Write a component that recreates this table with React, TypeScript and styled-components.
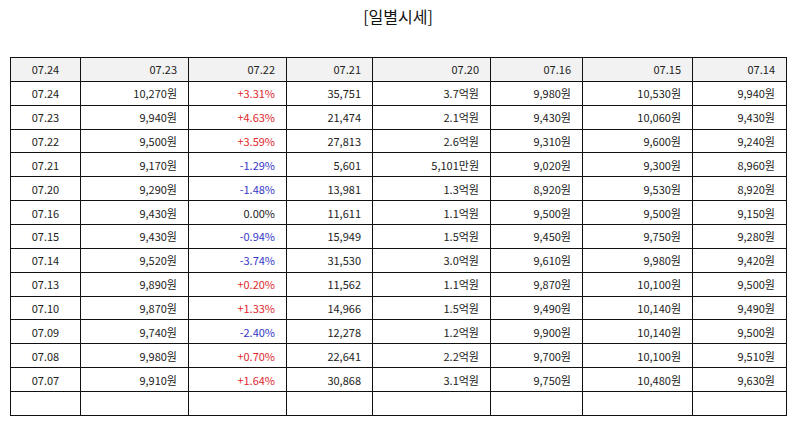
import styled, { createGlobalStyle } from "styled-components";

const GlobalStyle = createGlobalStyle`
    html, body {
        margin: 0;
        padding: 0;
        background: #ffffff;
    }
    body {
        font-family: "Noto Sans CJK KR", "Noto Sans", sans-serif;
        color: #222222;
    }
`;

const Page = styled.div`
    width: 794px;
    padding: 0 8px 0 10px;
    box-sizing: border-box;
`;

const Title = styled.h3`
    margin: 0;
    height: 57px;
    padding-top: 5px;
    box-sizing: border-box;
    text-align: center;
    font-size: 16px;
    font-weight: 400;
    line-height: 22px;
    color: #111111;
`;

const Table = styled.table`
    width: 776px;
    border-collapse: collapse;
    table-layout: fixed;
    font-size: 11px;
`;

const Cell = styled.td<{ $center?: boolean; $tone?: "up" | "down" }>`
    height: 22.87px;
    padding: ${(p) => (p.$center ? "0 2px" : "0 11px 0 4px")};
    border: 1px solid #111111;
    text-align: ${(p) => (p.$center ? "center" : "right")};
    color: ${(p) => (p.$tone === "up" ? "#e0282e" : p.$tone === "down" ? "#3636c8" : "#222222")};
    white-space: nowrap;
`;

const HeadCell = styled(Cell).attrs({ as: "th" })`
    font-weight: 400;
    background: #f2f2f2;
`;

const widths = [70, 108, 98, 86, 118, 92, 110, 94];
const header = ["07.24", "07.23", "07.22", "07.21", "07.20", "07.16", "07.15", "07.14"];

const rows: string[][] = [
    ["07.24", "10,270원", "+3.31%", "35,751", "3.7억원", "9,980원", "10,530원", "9,940원"],
    ["07.23", "9,940원", "+4.63%", "21,474", "2.1억원", "9,430원", "10,060원", "9,430원"],
    ["07.22", "9,500원", "+3.59%", "27,813", "2.6억원", "9,310원", "9,600원", "9,240원"],
    ["07.21", "9,170원", "-1.29%", "5,601", "5,101만원", "9,020원", "9,300원", "8,960원"],
    ["07.20", "9,290원", "-1.48%", "13,981", "1.3억원", "8,920원", "9,530원", "8,920원"],
    ["07.16", "9,430원", "0.00%", "11,611", "1.1억원", "9,500원", "9,500원", "9,150원"],
    ["07.15", "9,430원", "-0.94%", "15,949", "1.5억원", "9,450원", "9,750원", "9,280원"],
    ["07.14", "9,520원", "-3.74%", "31,530", "3.0억원", "9,610원", "9,980원", "9,420원"],
    ["07.13", "9,890원", "+0.20%", "11,562", "1.1억원", "9,870원", "10,100원", "9,500원"],
    ["07.10", "9,870원", "+1.33%", "14,966", "1.5억원", "9,490원", "10,140원", "9,490원"],
    ["07.09", "9,740원", "-2.40%", "12,278", "1.2억원", "9,900원", "10,140원", "9,500원"],
    ["07.08", "9,980원", "+0.70%", "22,641", "2.2억원", "9,700원", "10,100원", "9,510원"],
    ["07.07", "9,910원", "+1.64%", "30,868", "3.1억원", "9,750원", "10,480원", "9,630원"],
];

const toneOf = (v: string) => (v.startsWith("+") ? "up" : v.startsWith("-") ? "down" : undefined);

export default function App() {
    return (
        <>
            <GlobalStyle />
            <Page>
                <Title>{"[일별시세]"}</Title>
                <Table>
                    <colgroup>
                        {widths.map((w, i) => (
                            <col key={i} style={{ width: w }} />
                        ))}
                    </colgroup>
                    <thead>
                        <tr>
                            {header.map((h, i) => (
                                <HeadCell key={i} $center={i === 0}>
                                    {h}
                                </HeadCell>
                            ))}
                        </tr>
                    </thead>
                    <tbody>
                        {rows.map((r, ri) => (
                            <tr key={ri}>
                                {r.map((v, ci) => (
                                    <Cell key={ci} $center={ci === 0} $tone={ci === 2 ? toneOf(v) : undefined}>
                                        {v}
                                    </Cell>
                                ))}
                            </tr>
                        ))}
                        <tr>
                            {widths.map((_, i) => (
                                <Cell key={i} />
                            ))}
                        </tr>
                    </tbody>
                </Table>
            </Page>
        </>
    );
}
